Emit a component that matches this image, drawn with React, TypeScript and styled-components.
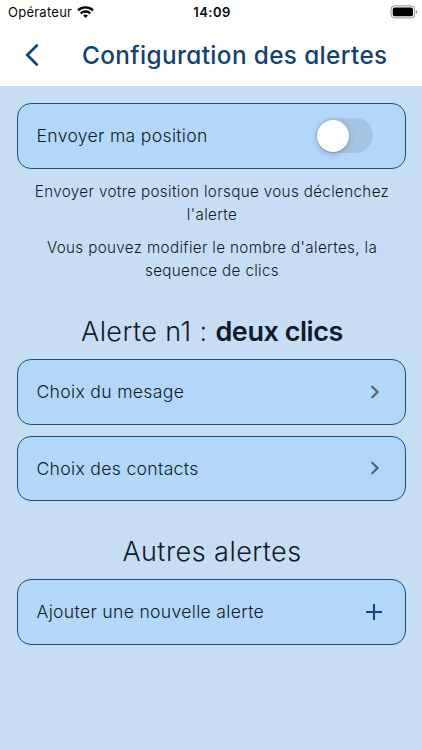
import React from "react";
import styled, { createGlobalStyle } from "styled-components";

const GlobalStyle = createGlobalStyle`
  * { box-sizing: border-box; }
  body { margin: 0; background: #c6ddf4; font-family: Inter, "Liberation Sans", sans-serif; }
`;

const Screen = styled.div`
  width: 422px;
  height: 750px;
  overflow: hidden;
  display: flex;
  flex-direction: column;
  background: #c6ddf4;
  color: #0f1b28;
`;

const StatusBar = styled.header`
  display: grid;
  grid-template-columns: 1fr auto 1fr;
  align-items: center;
  height: 24px;
  padding: 0 4px 0 8px;
  background: #fff;
  color: #080808;
`;

const Carrier = styled.div`
  display: flex;
  align-items: center;
  gap: 5px;
  font-size: 13px;
  letter-spacing: 0.25px;
`;

const Clock = styled.div`
  font-size: 13px;
  font-weight: 600;
  letter-spacing: 0.42px;
  margin-right: 2px;
`;

const BatterySlot = styled.div`
  display: flex;
  justify-content: flex-end;
`;

const NavBar = styled.nav`
  display: flex;
  align-items: center;
  height: 62px;
  padding: 0 0 0 25px;
  background: #fff;
  color: #114276;
`;

const BackButton = styled.button`
  display: flex;
  padding: 0;
  border: 0;
  background: none;
  color: inherit;
`;

const Title = styled.h1`
  margin: 0 0 0 43px;
  font-size: 24.3px;
  font-weight: 500;
  line-height: 32px;
  letter-spacing: 0.39px;
  white-space: nowrap;
  font-feature-settings: "cv11";
`;

const Content = styled.main`
  display: flex;
  flex-direction: column;
  padding: 17px 16px 0 17px;
`;

const Card = styled.section<{ $gap?: number }>`
  display: flex;
  align-items: center;
  justify-content: space-between;
  height: 65.5px;
  margin-top: ${(p) => p.$gap ?? 0}px;
  padding: 0 22.5px 0 18.5px;
  border: 1px solid #1c4d80;
  border-radius: 14px;
  background: #b2d7f8;
`;

const Label = styled.span`
  padding-top: 1px;
  font-size: 17.6px;
  font-weight: 350;
  line-height: 24px;
  letter-spacing: 0.31px;
`;

const Track = styled.button`
  display: flex;
  align-items: center;
  width: 57px;
  height: 35px;
  margin-right: 9.5px;
  padding: 0 1px;
  border: 0;
  border-radius: 18px;
  background: #a5c4e1;
`;

const Thumb = styled.span`
  width: 32px;
  height: 32px;
  border-radius: 50%;
  background: #fff;
  box-shadow: 0 2px 6px rgba(20, 50, 80, 0.25), 0 1px 1px rgba(20, 50, 80, 0.15);
`;

const Hint = styled.p<{ $gap: number }>`
  margin: ${(p) => p.$gap}px 0 0;
  padding-left: 1px;
  font-size: 15.2px;
  font-weight: 350;
  line-height: 23px;
  letter-spacing: 0.35px;
  text-align: center;
`;

const Heading = styled.h2<{ $gap: number; $spacing: number }>`
  margin: ${(p) => p.$gap}px 0 0;
  padding-left: 1px;
  font-size: 27px;
  font-weight: 300;
  line-height: 36px;
  letter-spacing: ${(p) => p.$spacing}px;
  text-align: center;
  white-space: nowrap;
`;

const Strong = styled.strong`
  font-weight: 600;
  letter-spacing: -0.45px;
`;

const Wifi = () => (
  <svg width="17" height="13" viewBox="0 0 17 13" fill="none" stroke="#000" strokeWidth="2.4">
    <path d="M1 4.3C5.2.4 11.8.4 16 4.3" />
    <path d="M3.7 7.3c2.7-2.4 6.9-2.4 9.6 0" />
    <path d="M8.5 11.9 6.1 9.5c1.3-1.2 3.5-1.2 4.8 0Z" fill="#000" stroke="none" />
  </svg>
);

const Battery = () => (
  <svg width="28" height="14" viewBox="0 0 28 14" fill="none">
    <rect x="1" y=".9" width="23.7" height="12" rx="3.6" stroke="#929292" />
    <rect x="2.7" y="2.6" width="20.3" height="8.6" rx="2" fill="#000" />
    <path d="M26 5.1c1.6.6 1.6 3.2 0 3.8Z" fill="#929292" />
  </svg>
);

const Back = () => (
  <svg width="14" height="22" viewBox="0 0 14 22" fill="none" stroke="currentColor" strokeWidth="2.6">
    <path d="M11.8 1.5 2.2 11l9.6 9.5" strokeLinecap="round" />
  </svg>
);

const Chevron = () => (
  <svg width="16" height="16" viewBox="0 0 16 16" fill="none" stroke="#566270" strokeWidth="2.3">
    <path d="m5.3 2.8 5.2 5.2-5.2 5.2" strokeLinecap="round" />
  </svg>
);

const Plus = () => (
  <svg width="18" height="18" viewBox="0 0 18 18" fill="none" stroke="#15477b" strokeWidth="2.1">
    <path d="M9 1v16M1 9h16" />
  </svg>
);

export default function App() {
  return (
    <Screen>
      <GlobalStyle />
      <StatusBar>
        <Carrier>Opérateur<Wifi /></Carrier>
        <Clock>14:09</Clock>
        <BatterySlot><Battery /></BatterySlot>
      </StatusBar>
      <NavBar>
        <BackButton aria-label="Retour"><Back /></BackButton>
        <Title>Configuration des alertes</Title>
      </NavBar>
      <Content>
        <Card>
          <Label>Envoyer ma position</Label>
          <Track role="switch" aria-checked="false"><Thumb /></Track>
        </Card>
        <Hint $gap={11}>Envoyer votre position lorsque vous déclenchez<br />l'alerte</Hint>
        <Hint $gap={10.5}>Vous pouvez modifier le nombre d'alertes, la<br />sequence de clics</Hint>
        <Heading $gap={31.5} $spacing={0.4}>Alerte n1 : <Strong>deux clics</Strong></Heading>
        <Card $gap={9.5}><Label>Choix du mesage</Label><Chevron /></Card>
        <Card $gap={11}><Label>Choix des contacts</Label><Chevron /></Card>
        <Heading $gap={32.5} $spacing={0.45}>Autres alertes</Heading>
        <Card $gap={9.5}><Label>Ajouter une nouvelle alerte</Label><Plus /></Card>
      </Content>
    </Screen>
  );
}
